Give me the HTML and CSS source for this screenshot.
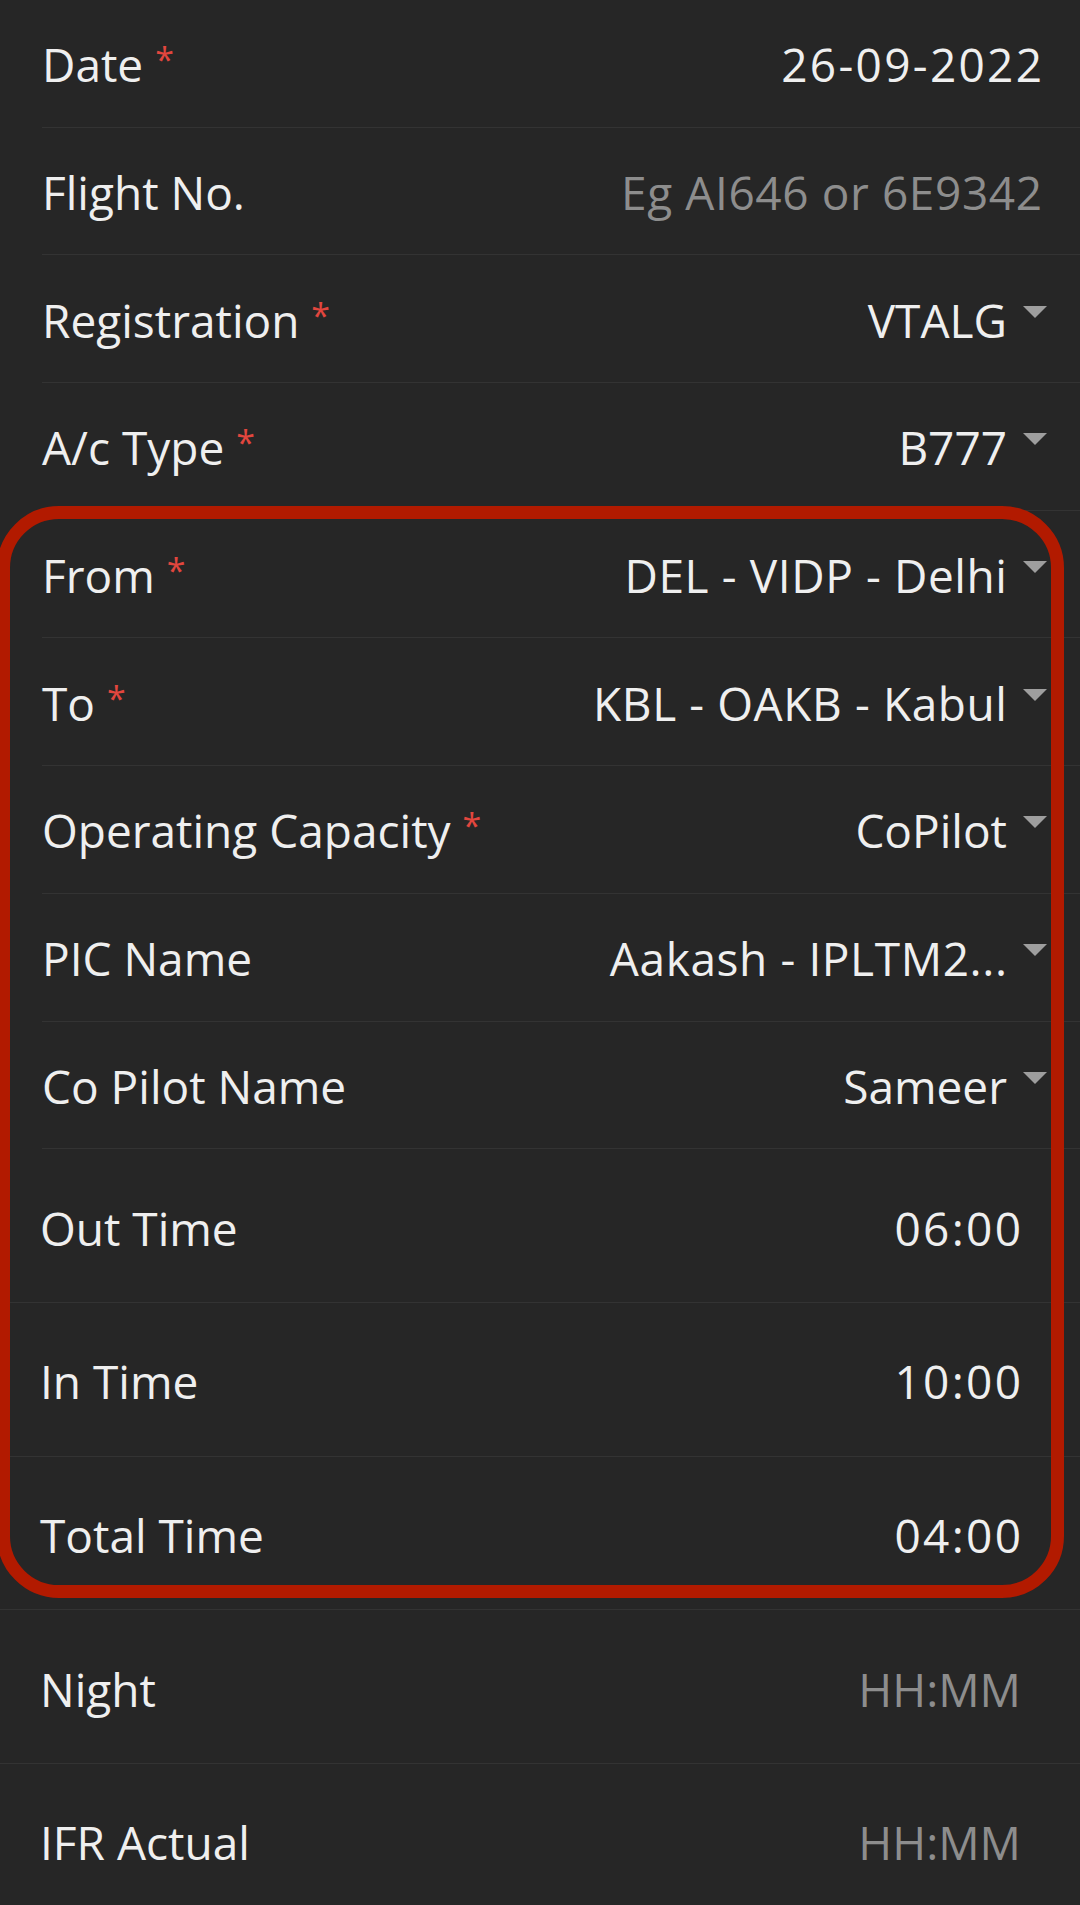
FILE: index.html
```html
<!DOCTYPE html>
<html lang="en">
<head>
<meta charset="utf-8">
<title>Flight Entry</title>
<link rel="stylesheet" href="styles.css">
</head>
<body>
<div class="form">
  <div class="list">
    <div class="row"><span class="label">Date <span class="req">*</span></span><span class="value num">26-09-2022</span></div>
    <div class="row"><span class="label">Flight No.</span><span class="value placeholder wide">Eg AI646 or 6E9342</span></div>
    <div class="row select"><span class="label">Registration <span class="req">*</span></span><span class="value">VTALG</span><span class="caret"></span></div>
    <div class="row select"><span class="label">A/c Type <span class="req">*</span></span><span class="value">B777</span><span class="caret"></span></div>
    <div class="row select"><span class="label">From <span class="req">*</span></span><span class="value wide">DEL - VIDP - Delhi</span><span class="caret"></span></div>
    <div class="row select"><span class="label">To <span class="req">*</span></span><span class="value wide">KBL - OAKB - Kabul</span><span class="caret"></span></div>
    <div class="row select"><span class="label">Operating Capacity <span class="req">*</span></span><span class="value">CoPilot</span><span class="caret"></span></div>
    <div class="row select"><span class="label">PIC Name</span><span class="value wide">Aakash - IPLTM2...</span><span class="caret"></span></div>
    <div class="row select"><span class="label">Co Pilot Name</span><span class="value">Sameer</span><span class="caret"></span></div>
  </div>
  <div class="time-list">
    <div class="trow"><span class="label">Out Time</span><span class="value num">06:00</span></div>
    <div class="trow"><span class="label">In Time</span><span class="value num">10:00</span></div>
    <div class="trow"><span class="label">Total Time</span><span class="value num">04:00</span></div>
    <div class="trow"><span class="label">Night</span><span class="value placeholder">HH:MM</span></div>
    <div class="trow"><span class="label">IFR Actual</span><span class="value placeholder">HH:MM</span></div>
  </div>
  <div class="highlight"></div>
</div>
</body>
</html>
```
FILE: styles.css
```css
html, body {
  margin: 0;
  padding: 0;
  background: #262626;
}
body {
  font-family: "Open Sans", "Noto Sans", sans-serif;
  color: #efefef;
  overflow: hidden;
}
.form {
  position: relative;
  width: 1080px;
  height: 1905px;
}
.list {
  margin-left: 42px;
}
.row {
  display: flex;
  align-items: center;
  height: 127.7px;
  box-sizing: border-box;
  border-bottom: 1px solid #333333;
  padding: 2px 38px 0 0;
  font-size: 46px;
}
.row.select {
  padding-right: 33px;
}
.label {
  flex: 1;
  white-space: nowrap;
}
.req {
  color: #e2463e;
  font-size: 34px;
  vertical-align: 10px;
}
.value {
  white-space: nowrap;
}
.num {
  letter-spacing: 2.3px;
  margin-right: -2.3px;
}
.wide {
  letter-spacing: 0.6px;
  margin-right: -0.6px;
}
.placeholder {
  color: #8d8d8d;
}
.caret {
  width: 0;
  height: 0;
  margin-left: 16px;
  margin-bottom: 16px;
  border-left: 12.5px solid transparent;
  border-right: 12.5px solid transparent;
  border-top: 12px solid #9e9e9e;
}
.trow {
  display: flex;
  align-items: center;
  height: 153.7px;
  box-sizing: border-box;
  border-bottom: 1px solid #333333;
  padding: 4px 59px 0 40px;
  font-size: 46px;
}
.highlight {
  position: absolute;
  top: 506px;
  left: -3px;
  width: 1067px;
  height: 1092px;
  box-sizing: border-box;
  border: 13px solid #b21a00;
  border-radius: 62px;
  pointer-events: none;
}
```
